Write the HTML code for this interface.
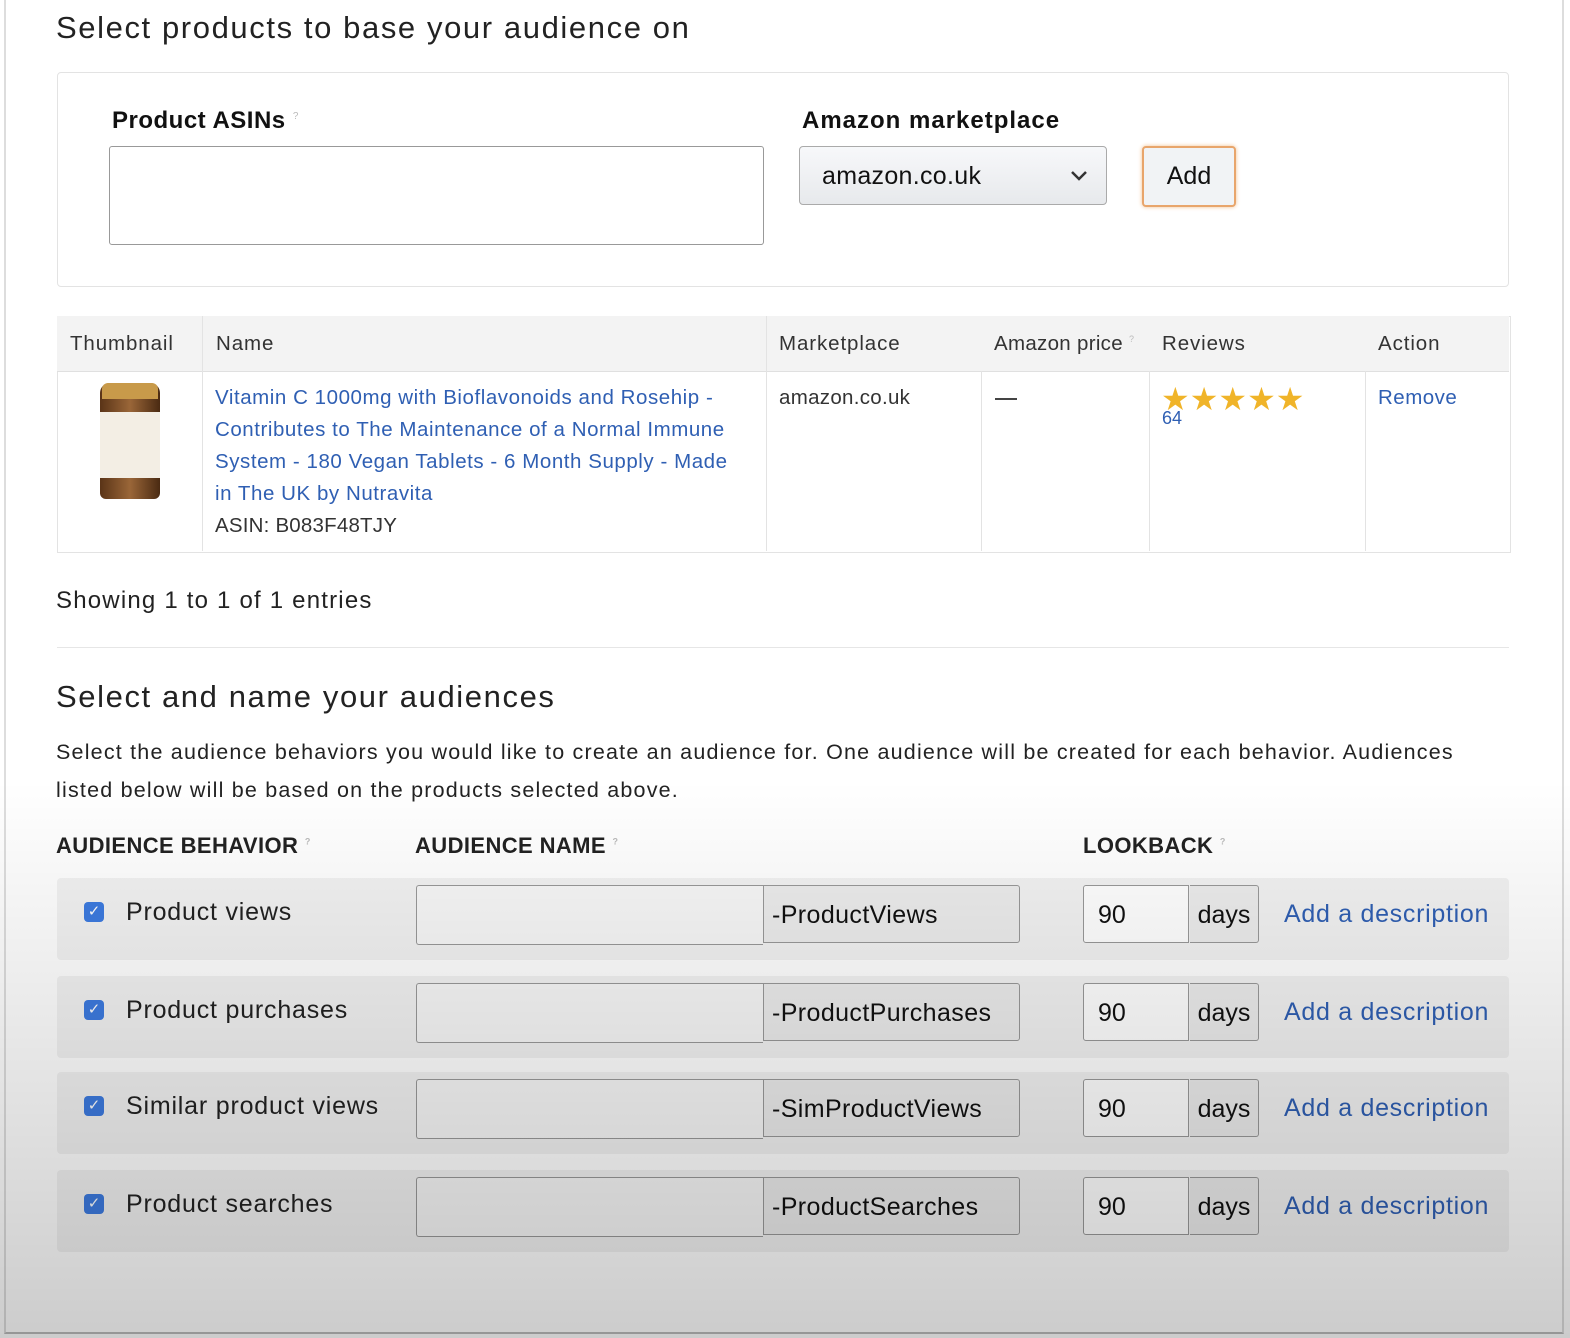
<!DOCTYPE html>
<html><head><meta charset="utf-8"><style>
body{margin:0;width:1570px;height:1338px;background:#fff;font-family:"Liberation Sans",sans-serif;color:#111;position:relative;overflow:hidden}
.a{position:absolute}
.t{font-size:20.5px;color:#333;letter-spacing:0.9px}
.lnk{color:#2f5fb3}
.row{position:absolute;left:57px;width:1452px;height:82px;background:#f2f2f2;border-radius:4px}
.cb{position:absolute;left:27px;top:24px;width:20px;height:20px;background:#3d7be0;border-radius:4px;color:#fff;font-size:15px;text-align:center;line-height:20px}
.lbl{position:absolute;left:69px;top:20px;font-size:25px;color:#222;letter-spacing:0.8px}
.inp{position:absolute;left:359px;top:7px;width:346px;height:58px;border:1px solid #999;border-right:none;background:#f7f7f7;border-radius:3px 0 0 3px}
.suf{position:absolute;left:706px;top:7px;width:257px;height:58px;border:1px solid #999;background:#ececec;font-size:25px;line-height:58px;padding-left:8px;box-sizing:border-box;border-radius:0 3px 3px 0;letter-spacing:0.4px}
.lb{position:absolute;left:1026px;top:7px;width:106px;height:58px;border:1px solid #999;background:#fff;font-size:25px;line-height:58px;padding-left:14px;box-sizing:border-box;border-radius:3px 0 0 3px}
.dy{position:absolute;left:1133px;top:7px;width:69px;height:58px;border:1px solid #999;border-left:none;background:#ececec;font-size:25px;line-height:58px;text-align:center;box-sizing:border-box;border-radius:0 3px 3px 0}
.ad{position:absolute;left:1227px;top:22px;font-size:25px;color:#2f5fb3;letter-spacing:0.7px}
</style></head><body>
<div class="a" style="left:4px;top:0;width:1556px;height:1332px;border-left:2px solid #ddd;border-right:2px solid #ddd;border-bottom:2px solid #bbb"></div>
<div class="a" style="left:56px;top:10px;font-size:31px;color:#222;letter-spacing:1.6px">Select products to base your audience on</div>
<div class="a" style="left:57px;top:72px;width:1450px;height:213px;border:1px solid #e3e3e3;border-radius:4px"></div>
<div class="a" style="left:112px;top:107px;font-size:24px;font-weight:bold;letter-spacing:0.5px">Product ASINs <sup style="font-size:10px;color:#bbb;font-weight:normal">?</sup></div>
<div class="a" style="left:109px;top:146px;width:653px;height:97px;border:1px solid #999;border-radius:3px"></div>
<div class="a" style="left:802px;top:107px;font-size:24px;font-weight:bold;letter-spacing:1px">Amazon marketplace</div>
<div class="a" style="left:799px;top:146px;width:308px;height:59px;border:1px solid #aaa;border-radius:4px;background:linear-gradient(#f7f8fa,#e7e9ec);font-size:25px;line-height:59px;box-sizing:border-box;padding-left:22px;letter-spacing:0.3px">amazon.co.uk<svg style="position:absolute;right:18px;top:23px" width="18" height="12" viewBox="0 0 18 12"><path d="M2 2 L9 9 L16 2" fill="none" stroke="#333" stroke-width="2.5"/></svg></div>
<div class="a" style="left:1142px;top:146px;width:94px;height:61px;border:2px solid #e8a56b;border-radius:4px;background:#f1f3f5;font-size:25px;line-height:57px;text-align:center;box-sizing:border-box;box-shadow:0 0 4px #f0c090">Add</div>
<div class="a" style="left:57px;top:316px;width:1452px;height:235px;border:1px solid #e3e3e3"></div>
<div class="a" style="left:57px;top:316px;width:1452px;height:55px;background:#f3f3f3;border-bottom:1px solid #e0e0e0"></div>
<div class="a" style="left:202px;top:316px;width:1px;height:235px;background:#e3e3e3"></div>
<div class="a" style="left:766px;top:316px;width:1px;height:235px;background:#e3e3e3"></div>
<div class="a" style="left:981px;top:371px;width:1px;height:180px;background:#e3e3e3"></div>
<div class="a" style="left:1149px;top:371px;width:1px;height:180px;background:#e3e3e3"></div>
<div class="a" style="left:1365px;top:371px;width:1px;height:180px;background:#e3e3e3"></div>
<div class="a t" style="left:70px;top:332px">Thumbnail</div>
<div class="a t" style="left:216px;top:332px">Name</div>
<div class="a t" style="left:779px;top:332px">Marketplace</div>
<div class="a t" style="left:994px;top:332px;letter-spacing:0.3px">Amazon price <sup style="font-size:9px;color:#bbb">?</sup></div>
<div class="a t" style="left:1162px;top:332px">Reviews</div>
<div class="a t" style="left:1378px;top:332px">Action</div>
<div class="a" style="left:100px;top:383px;width:60px;height:116px;border-radius:10px 10px 6px 6px;background:linear-gradient(90deg,#5a3417,#9a6638 50%,#4a2a12)"></div>
<div class="a" style="left:102px;top:383px;width:56px;height:16px;background:#c89a4a;border-radius:6px 6px 0 0"></div>
<div class="a" style="left:100px;top:412px;width:60px;height:66px;background:#f3eee4"></div>
<div class="a t lnk" style="left:215px;top:382px;line-height:32px;width:526px;letter-spacing:0.55px">Vitamin C 1000mg with Bioflavonoids and Rosehip - Contributes to The Maintenance of a Normal Immune System - 180 Vegan Tablets - 6 Month Supply - Made in The UK by Nutravita</div>
<div class="a t" style="left:215px;top:514px;letter-spacing:0.2px">ASIN: B083F48TJY</div>
<div class="a t" style="left:779px;top:386px;letter-spacing:0.3px">amazon.co.uk</div>
<div class="a" style="left:995px;top:398px;width:22px;height:2px;background:#444"></div>
<div class="a" style="left:1161px;top:380px;font-size:32px;color:#f0b429;letter-spacing:0px">★★★★★</div>
<div class="a lnk" style="left:1162px;top:408px;font-size:18px">64</div>
<div class="a t lnk" style="left:1378px;top:386px;letter-spacing:0.5px">Remove</div>
<div class="a" style="left:56px;top:587px;font-size:24px;color:#222;letter-spacing:1.2px">Showing 1 to 1 of 1 entries</div>
<div class="a" style="left:57px;top:647px;width:1452px;height:1px;background:#e6e6e6"></div>
<div class="a" style="left:56px;top:679px;font-size:31px;color:#222;letter-spacing:1.6px">Select and name your audiences</div>
<div class="a" style="left:56px;top:733px;font-size:21.5px;color:#222;line-height:38px;width:1440px;letter-spacing:1.2px">Select the audience behaviors you would like to create an audience for. One audience will be created for each behavior. Audiences listed below will be based on the products selected above.</div>
<div class="a" style="left:56px;top:833px;font-size:22px;font-weight:bold;color:#222;letter-spacing:0.4px">AUDIENCE BEHAVIOR <sup style="font-size:9px;color:#bbb">?</sup></div>
<div class="a" style="left:415px;top:833px;font-size:22px;font-weight:bold;color:#222;letter-spacing:0.4px">AUDIENCE NAME <sup style="font-size:9px;color:#bbb">?</sup></div>
<div class="a" style="left:1083px;top:833px;font-size:22px;font-weight:bold;color:#222;letter-spacing:0.4px">LOOKBACK <sup style="font-size:9px;color:#bbb">?</sup></div>
<div class="row" style="top:878px"><div class="cb">✓</div><div class="lbl">Product views</div><div class="inp"></div><div class="suf">-ProductViews</div><div class="lb">90</div><div class="dy">days</div><div class="ad">Add a description</div></div>
<div class="row" style="top:976px"><div class="cb">✓</div><div class="lbl">Product purchases</div><div class="inp"></div><div class="suf">-ProductPurchases</div><div class="lb">90</div><div class="dy">days</div><div class="ad">Add a description</div></div>
<div class="row" style="top:1072px"><div class="cb">✓</div><div class="lbl">Similar product views</div><div class="inp"></div><div class="suf">-SimProductViews</div><div class="lb">90</div><div class="dy">days</div><div class="ad">Add a description</div></div>
<div class="row" style="top:1170px"><div class="cb">✓</div><div class="lbl">Product searches</div><div class="inp"></div><div class="suf">-ProductSearches</div><div class="lb">90</div><div class="dy">days</div><div class="ad">Add a description</div></div>
<div class="a" style="left:0;top:780px;width:1570px;height:558px;background:linear-gradient(rgba(0,0,0,0),rgba(0,0,0,0.2));pointer-events:none"></div>
</body></html>
